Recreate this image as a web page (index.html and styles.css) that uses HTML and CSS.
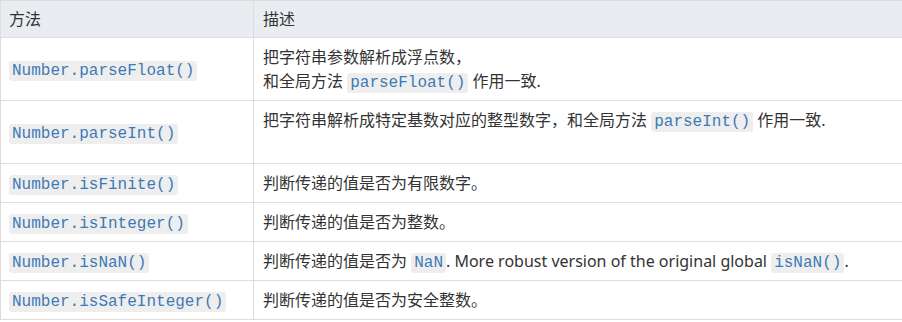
FILE: index.html
```html
<!DOCTYPE html>
<html lang="zh-CN">
<head>
<meta charset="utf-8">
<link rel="stylesheet" href="styles.css">
</head>
<body>
<table class="api">
  <thead>
    <tr><th class="c1">方法</th><th>描述</th></tr>
  </thead>
  <tbody>
    <tr>
      <td class="c1"><code>Number.parseFloat()</code></td>
      <td>把字符串参数解析成浮点数，<br>和全局方法 <code>parseFloat()</code> 作用一致.</td>
    </tr>
    <tr>
      <td class="c1"><code>Number.parseInt()</code></td>
      <td>把字符串解析成特定基数对应的整型数字，和全局方法 <code>parseInt()</code> 作用一致.<br>&nbsp;</td>
    </tr>
    <tr>
      <td class="c1"><code>Number.isFinite()</code></td>
      <td>判断传递的值是否为有限数字。</td>
    </tr>
    <tr>
      <td class="c1"><code>Number.isInteger()</code></td>
      <td>判断传递的值是否为整数。</td>
    </tr>
    <tr>
      <td class="c1"><code>Number.isNaN()</code></td>
      <td>判断传递的值是否为 <code>NaN</code>. More robust version of the original global <code>isNaN()</code>.</td>
    </tr>
    <tr>
      <td class="c1"><code>Number.isSafeInteger()</code></td>
      <td>判断传递的值是否为安全整数。</td>
    </tr>
  </tbody>
</table>
</body>
</html>
```
FILE: styles.css
```css
html, body {
  margin: 0;
  padding: 0;
  background: #fff;
  overflow: hidden;
}
.api {
  border-collapse: collapse;
  width: 906px;
  font-family: "Noto Sans", "Noto Sans CJK SC", sans-serif;
  font-size: 16px;
  color: #333;
  line-height: 24px;
}
.api th, .api td {
  border: 1px solid #ddd;
  padding: 7px 9px;
  text-align: left;
  vertical-align: middle;
}
.api th {
  background: #e9ecf0;
  font-weight: normal;
  line-height: 22px;
}
.api .c1 {
  width: 235px;
  padding-left: 8px;
}
.api code {
  font-family: "Liberation Mono", monospace;
  font-size: 16px;
  line-height: 1;
  color: #3d7ab5;
  background: #eeeeee;
  border-radius: 3px;
  padding: 1px 3px;
}
```
